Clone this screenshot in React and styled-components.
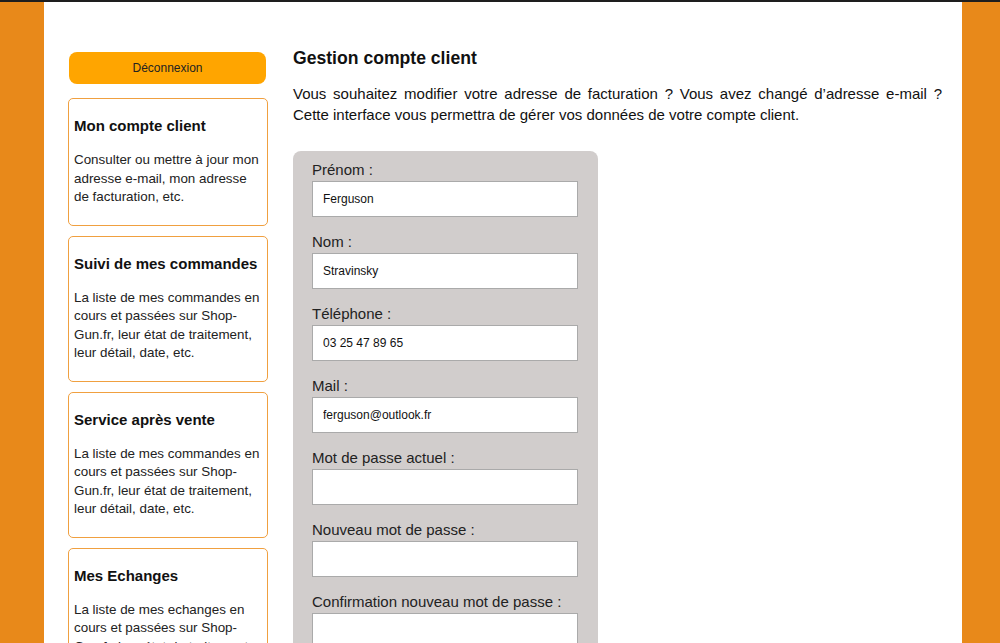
import React from "react";
import styled, { createGlobalStyle } from "styled-components";

const GlobalStyle = createGlobalStyle`
  html, body {
    margin: 0;
    padding: 0;
    background: #e8891a;
    font-family: "Liberation Sans", Arial, sans-serif;
    color: #111;
  }
  body {
    border-top: 2px solid #1e1e1e;
  }
`;

const Wrapper = styled.div`
  margin-left: 44px;
  width: 918px;
  min-height: 641px;
  background: #fff;
  box-sizing: border-box;
  padding: 50px 20px 0 24px;
  display: flex;
  gap: 25px;
  align-items: flex-start;
`;

const Sidebar = styled.aside`
  width: 200px;
  flex-shrink: 0;
  display: flex;
  flex-direction: column;
  gap: 10px;
`;

const LogoutButton = styled.button`
  width: 197px;
  height: 32px;
  margin: 0 0 4px 1px;
  border: none;
  border-radius: 8px;
  background: #ffa500;
  color: #222;
  font-family: "Liberation Sans", Arial, sans-serif;
  font-size: 12px;
  cursor: pointer;
`;

const Card = styled.div`
  border: 1px solid #f0a040;
  border-radius: 5px;
  padding: 17px 5px 18px 5px;
  h3 {
    margin: 0 0 16px;
    font-size: 15px;
    line-height: 19px;
    font-weight: bold;
  }
  p {
    margin: 0;
    font-size: 13.4px;
    line-height: 18.5px;
    color: #222;
  }
`;

const Main = styled.main`
  flex: 1;
`;

const Title = styled.h2`
  margin: -4px 0 0;
  font-size: 17.6px;
  line-height: 20px;
  font-weight: bold;
`;

const Intro = styled.p`
  margin: 15px 0 26px;
  font-size: 15px;
  line-height: 21px;
  text-align: justify;
  color: #111;
`;

const FormBox = styled.form`
  width: 305px;
  box-sizing: border-box;
  background: #d1cdcc;
  border-radius: 8px;
  padding: 10px 20px 20px 19px;
  display: flex;
  flex-direction: column;
  gap: 16px;
`;

const Field = styled.div`
  display: flex;
  flex-direction: column;
  gap: 2px;
`;

const Label = styled.label`
  font-size: 15px;
  line-height: 18px;
  color: #222;
`;

const Input = styled.input`
  width: 266px;
  height: 36px;
  box-sizing: border-box;
  border: 1px solid #aaa;
  background: #fff;
  padding: 0 10px;
  font-family: "Liberation Sans", Arial, sans-serif;
  font-size: 12px;
  color: #111;
  outline: none;
`;

const cards = [
  {
    title: "Mon compte client",
    text: "Consulter ou mettre à jour mon adresse e-mail, mon adresse de facturation, etc.",
  },
  {
    title: "Suivi de mes commandes",
    text: "La liste de mes commandes en cours et passées sur Shop-Gun.fr, leur état de traitement, leur détail, date, etc.",
  },
  {
    title: "Service après vente",
    text: "La liste de mes commandes en cours et passées sur Shop-Gun.fr, leur état de traitement, leur détail, date, etc.",
  },
  {
    title: "Mes Echanges",
    text: "La liste de mes echanges en cours et passées sur Shop-Gun.fr, leur état de traitement, leur détail, date, etc.",
  },
];

const fields = [
  { label: "Prénom :", value: "Ferguson" },
  { label: "Nom :", value: "Stravinsky" },
  { label: "Téléphone :", value: "03 25 47 89 65" },
  { label: "Mail :", value: "ferguson@outlook.fr" },
  { label: "Mot de passe actuel :", value: "", type: "password" },
  { label: "Nouveau mot de passe :", value: "", type: "password" },
  { label: "Confirmation nouveau mot de passe :", value: "", type: "password" },
];

export default function App() {
  return (
    <>
      <GlobalStyle />
      <Wrapper>
        <Sidebar>
          <LogoutButton>Déconnexion</LogoutButton>
          {cards.map((card, index) => (
            <Card key={index}>
              <h3>{card.title}</h3>
              <p>{card.text}</p>
            </Card>
          ))}
        </Sidebar>
        <Main>
          <Title>Gestion compte client</Title>
          <Intro>
            Vous souhaitez modifier votre adresse de facturation ? Vous avez
            changé d’adresse e-mail ? Cette interface vous permettra de gérer
            vos données de votre compte client.
          </Intro>
          <FormBox onSubmit={(e) => e.preventDefault()}>
            {fields.map((field, index) => (
              <Field key={index}>
                <Label>{field.label}</Label>
                <Input
                  type={field.type || "text"}
                  defaultValue={field.value}
                />
              </Field>
            ))}
          </FormBox>
        </Main>
      </Wrapper>
    </>
  );
}
